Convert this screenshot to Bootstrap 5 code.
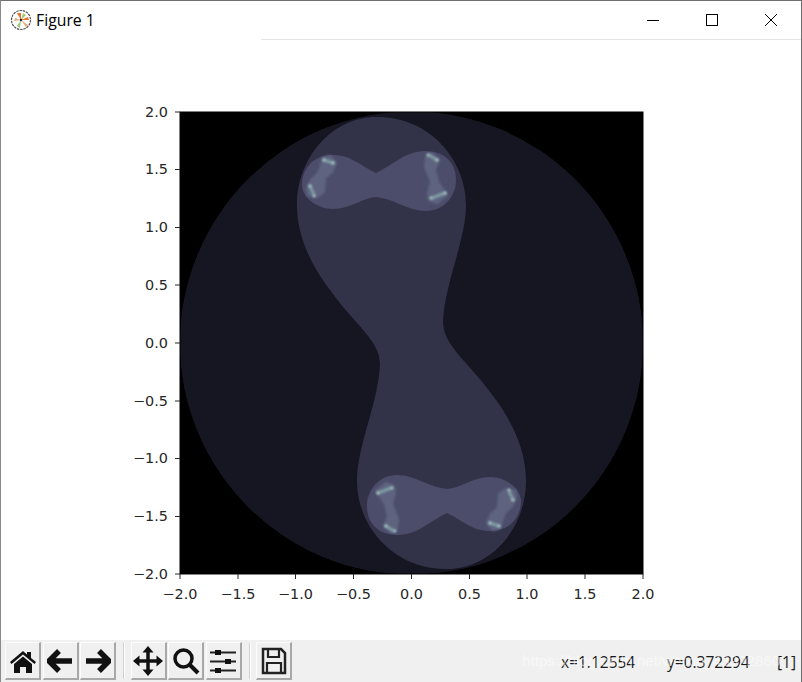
<!DOCTYPE html>
<html lang="en">
<head>
<meta charset="UTF-8">
<meta name="viewport" content="width=device-width, initial-scale=1.0">
<title>Figure 1</title>
<link rel="stylesheet" href="https://cdn.jsdelivr.net/npm/bootstrap@5.3.2/dist/css/bootstrap.min.css">
<style>
    html, body { height: 100%; overflow: hidden; background: #fff; }
    .fig-window { width: 802px; height: 682px; border-top: 1px solid #707070; border-left: 1px solid #8a8a8a; border-right: 1px solid #707070; }
    .fig-title { height: 39px; font: 15.8px "Open Sans", "Noto Sans", sans-serif; color: #000; padding-left: 9px; padding-bottom: 2px; position: relative; }
    .fig-title::after { content: ""; position: absolute; left: 260px; right: 0; bottom: 0; border-bottom: 1px solid #e5e5e5; }
    .win-btn { width: 59px; display: flex; justify-content: center; }
    .win-btns { margin-right: 1px; }
    .fig-canvas { display: block; width: 800px; height: 600px; }
    .tick-label { font: 14.4px "DejaVu Sans", sans-serif; fill: #262626; }
    .fig-toolbar { height: 42px; background: #f0f0f0; padding-left: 4px; padding-top: 2px; position: relative; }
    .tool-btn { width: 36px; height: 38px; padding: 0; margin-right: 1.5px; border-radius: 0; background: #f0f0f0; border: 0; border-top: 1px solid #fcfcfc; border-left: 1px solid #fcfcfc; border-right: 2px solid #a8a8a8; border-bottom: 2px solid #a8a8a8; display: flex; align-items: center; justify-content: center; }
    .tool-btn svg { filter: blur(.45px); }
    .tool-sep { width: 2px; height: 36px; background: #d0d0d0; border-right: 1px solid #fff; margin: 1px 5.500px 0 5.500px; }
    .coord-text { font: 15.5px "Open Sans", "Noto Sans", sans-serif; color: #1a1a1a; position: absolute; top: 11px; white-space: nowrap; }
    .watermark { font: 15.2px "Liberation Sans", sans-serif; color: rgba(255,255,255,.55); position: absolute; left: 521px; top: 12px; white-space: nowrap; }
</style>
</head>
<body>
<div class="fig-window d-flex flex-column">
    <div class="fig-title d-flex align-items-center justify-content-between">
        <div class="d-flex align-items-center gap-1">
            <svg width="22" height="22" viewBox="0 0 22 22">
                <circle cx="11" cy="11" r="9.500" fill="#fff" stroke="#555" stroke-width="1.200" stroke-dasharray="2.500 .8"/>
                <path d="M11 11 7 4h4zM11 11l7-3 1 3z" fill="#e8702a"/>
                <path d="M11 11 5 9l-1 3zM11 11l5 7 2-2z" fill="#e8a878"/>
                <path d="M11 11 7 17l3 2zM11 11l2-7 3 2z" fill="#9cc878"/>
                <circle cx="11" cy="11" r="1.200" fill="#222"/>
            </svg>
            <span>Figure 1</span>
        </div>
        <div class="win-btns d-flex align-items-center">
            <div class="win-btn"><svg width="14" height="14"><path d="M1 7.500h12" stroke="#000" fill="none"/></svg></div>
            <div class="win-btn"><svg width="14" height="14"><rect x="1.500" y="1.500" width="11" height="11" stroke="#000" fill="none"/></svg></div>
            <div class="win-btn"><svg width="14" height="14"><path d="M1 1l12 12M13 1 1 13" stroke="#000" fill="none"/></svg></div>
        </div>
    </div>

    <svg class="fig-canvas" viewBox="1 40 800 600">
        <defs>
            <clipPath id="ax"><rect x="180" y="112" width="463" height="462"/></clipPath>
            <filter id="soft" x="-10%" y="-10%" width="120%" height="120%"><feGaussianBlur stdDeviation=".45"/></filter>
            <filter id="glow" x="-30%" y="-30%" width="160%" height="160%"><feGaussianBlur stdDeviation=".9"/></filter>
            <g id="lobes">
                <path fill="#4c4d6b" d="M376 173C358 164 350 155 333 155C312 155 302 170 302 185C302 198 318 209 333 209C350 209 362 198 376 197C392 198 408 211 426 211C444 211 456 196 456 180C456 162 444 151 425 151C405 151 392 166 376 173Z"/>
                <g fill="#5e647f" stroke="#5e647f" stroke-width="2" stroke-linejoin="round" filter="url(#glow)">
                    <path d="M330 156 336 163 332 172 325 178 324 192 317 197 308 195 307 188 311 180 318 173 321 165 323 158Z"/>
                    <path d="M432 154 439 160 435 170 438 182 447 195 437 203 429 200 428 193 431 182 425 167 426 157Z"/>
                </g>
                <g fill="none" stroke="#7f9ea6" stroke-linecap="round" stroke-width="3" filter="url(#glow)">
                    <path d="M324 160 333 163"/>
                    <path d="M310 186 314 195"/>
                    <path d="M429 155 437 160"/>
                    <path d="M432 198 445 193"/>
                </g>
                <g fill="#b4d0ce" filter="url(#glow)">
                    <circle cx="324" cy="160" r="1.300"/><circle cx="333" cy="163" r="1.300"/>
                    <circle cx="310" cy="186" r="1.300"/><circle cx="314" cy="196" r="1.300"/>
                    <circle cx="428" cy="155" r="1.300"/><circle cx="437" cy="160" r="1.300"/>
                    <circle cx="431" cy="198" r="1.300"/><circle cx="445" cy="193" r="1.300"/>
                </g>
            </g>
        </defs>

        <rect x="180" y="112" width="463" height="462" fill="#000"/>
        <g clip-path="url(#ax)" filter="url(#soft)">
            <circle cx="411.500" cy="343" r="231.500" fill="#181823"/>
            <path fill="#33334a" d="M377 117C430 117 466 160 466 205C466 240 444 285 443 322C443 345 468 362 490 392C512 420 526 450 526 481C526 526 493 569 446 569C393 569 357 526 357 481C357 446 379 401 380 364C380 341 355 324 333 294C311 266 297 236 297 205C297 160 330 117 377 117Z"/>
            <use href="#lobes"/>
            <use href="#lobes" transform="rotate(180 411.500 343)"/>
        </g>

        <g stroke="#262626" stroke-width="1" fill="none">
            <rect x="180" y="112" width="463" height="462" stroke="#000"/>
            <path d="M180 574v5M238 574v5M295.500 574v5M353.500 574v5M411.500 574v5M469.500 574v5M527 574v5M585 574v5M643 574v5"/>
            <path d="M175 574h5M175 516.500h5M175 458.500h5M175 401h5M175 343h5M175 285h5M175 227.500h5M175 169.500h5M175 112h5"/>
        </g>
        <g text-anchor="middle">
            <text class="tick-label" x="180" y="599">−2.0</text>
            <text class="tick-label" x="238" y="599">−1.5</text>
            <text class="tick-label" x="295.500" y="599">−1.0</text>
            <text class="tick-label" x="353.500" y="599">−0.5</text>
            <text class="tick-label" x="411.500" y="599">0.0</text>
            <text class="tick-label" x="469.500" y="599">0.5</text>
            <text class="tick-label" x="527" y="599">1.0</text>
            <text class="tick-label" x="585" y="599">1.5</text>
            <text class="tick-label" x="643" y="599">2.0</text>
        </g>
        <g text-anchor="end">
            <text class="tick-label" x="168" y="579">−2.0</text>
            <text class="tick-label" x="168" y="521">−1.5</text>
            <text class="tick-label" x="168" y="463">−1.0</text>
            <text class="tick-label" x="168" y="406">−0.5</text>
            <text class="tick-label" x="168" y="348">0.0</text>
            <text class="tick-label" x="168" y="290">0.5</text>
            <text class="tick-label" x="168" y="232">1.0</text>
            <text class="tick-label" x="168" y="174">1.5</text>
            <text class="tick-label" x="168" y="117">2.0</text>
        </g>
    </svg>

    <div class="fig-toolbar d-flex align-items-start flex-grow-1">
        <button class="tool-btn" type="button" aria-label="Home"><svg width="28" height="26" viewBox="0 0 28 26"><path d="M1 14 14 3l4 3.500V4h4v6l5 4-1.500 2L14 6.500 2.500 16zM5 16 14 8.500 23 16v9h-6v-6h-6v6H5z" fill="#111"/></svg></button>
        <button class="tool-btn" type="button" aria-label="Back"><svg width="26" height="24" viewBox="0 0 26 24"><path d="M12 2 2 12l10 10M3 12h22" fill="none" stroke="#111" stroke-width="5.500" stroke-linejoin="round"/></svg></button>
        <button class="tool-btn" type="button" aria-label="Forward"><svg width="26" height="24" viewBox="0 0 26 24"><path d="M14 2l10 10-10 10M23 12H1" fill="none" stroke="#111" stroke-width="5.500" stroke-linejoin="round"/></svg></button>
        <div class="tool-sep"></div>
        <button class="tool-btn" type="button" aria-label="Pan"><svg width="30" height="30" viewBox="0 0 30 30"><path d="M15 3v24M3 15h24" stroke="#111" stroke-width="3.500"/><path d="M15 0l5.500 6.500h-11zM15 30l5.500-6.500h-11zM0 15l6.500-5.500v11zM30 15l-6.500-5.500v11z" fill="#111"/></svg></button>
        <button class="tool-btn" type="button" aria-label="Zoom"><svg width="28" height="28" viewBox="0 0 28 28"><circle cx="11.500" cy="11.500" r="8.500" fill="none" stroke="#111" stroke-width="3.500"/><path d="M18 18l8 8" stroke="#111" stroke-width="4"/></svg></button>
        <button class="tool-btn" type="button" aria-label="Configure"><svg width="26" height="26" viewBox="0 0 26 26"><path d="M0 4.500h26M0 13.500h26M0 22.500h26" stroke="#222" stroke-width="2"/><path d="M5 2h6v5H5zM15 11h6v5h-6zM5 20h6v5H5z" fill="#111"/></svg></button>
        <div class="tool-sep"></div>
        <button class="tool-btn" type="button" aria-label="Save"><svg width="26" height="28" viewBox="0 0 26 28"><path d="M2 2h18l4 4v20H2z" fill="#f0f0f0" stroke="#222" stroke-width="2.500"/><path d="M7 3v7h11V3M6 26V16h14v10" fill="none" stroke="#222" stroke-width="2.200"/></svg></button>
        <span class="coord-text" style="left:560px">x=1.12554</span>
        <span class="coord-text" style="left:666px">y=0.372294</span>
        <span class="coord-text" style="left:776px">[1]</span>
        <span class="watermark">https://blog.csdn.net/weixin_43922860</span>
    </div>
</div>
<script src="https://cdn.jsdelivr.net/npm/bootstrap@5.3.2/dist/js/bootstrap.bundle.min.js"></script>
</body>
</html>
